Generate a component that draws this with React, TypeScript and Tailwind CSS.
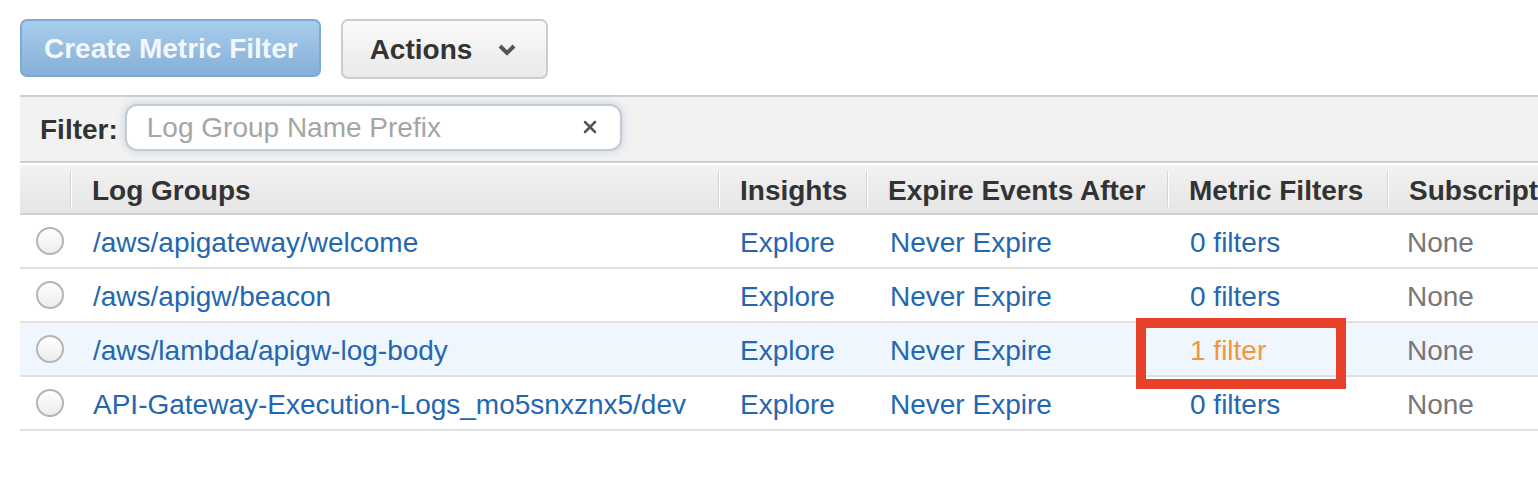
import { X } from "lucide-react";

const cols = "grid grid-cols-[50px_648px_148px_301px_220px_260px]";

const rows = [
  { name: "/aws/apigateway/welcome", filters: "0 filters" },
  { name: "/aws/apigw/beacon", filters: "0 filters" },
  { name: "/aws/lambda/apigw-log-body", filters: "1 filter", active: true },
  { name: "API-Gateway-Execution-Logs_mo5snxznx5/dev", filters: "0 filters" },
];

function HeaderCell({ label }: { label: string }) {
  return (
    <div className="flex items-center">
      <div className="w-[2px] h-[36px] bg-[#d3d3d3] border-r border-white" />
      <span className="pl-5 pt-[3px] font-bold text-[#333] whitespace-nowrap">{label}</span>
    </div>
  );
}

function Radio() {
  return (
    <div className="w-[28px] h-[28px] rounded-full border-2 border-[#b5b5b5] bg-gradient-to-b from-white to-[#ececec] shadow-[inset_0_1px_1px_rgba(255,255,255,0.9)]" />
  );
}

export default function App() {
  return (
    <div className="w-[1538px] h-[500px] bg-white overflow-hidden font-['Liberation_Sans',Arial,sans-serif] text-[28px] leading-none">
      <div className="flex gap-5 pl-5 pt-[19px]">
        <button className="h-[58px] pl-[22px] pr-[21px] pt-[2px] rounded-[7px] border-2 border-[#7ea9d1] bg-gradient-to-b from-[#a8cdec] to-[#86b0d8] text-[#f4f8fc] font-bold">
          Create Metric Filter
        </button>
        <button className="h-[60px] pl-[27px] pr-[30px] pt-[2px] rounded-[7px] border-2 border-[#cccccc] bg-gradient-to-b from-[#fbfbfb] to-[#e9e9e9] text-[#333] font-bold flex items-center gap-[26px]">
          Actions
          <svg width="18" height="12" viewBox="0 0 18 12">
            <path d="M2 2 L9 9 L16 2" fill="none" stroke="#555" strokeWidth="4" />
          </svg>
        </button>
      </div>

      <div className="ml-5 mt-4">
        <div className="h-[68px] border-t-2 border-b-2 border-[#cfcfcf] bg-[#f2f2f2] flex items-center pl-5 gap-[7px]">
          <span className="font-bold text-[#333] pt-[2px]">Filter:</span>
          <div className="w-[497px] h-[47px] -mt-1 rounded-[12px] border-2 border-[#c9c9c9] bg-white shadow-[0_0_8px_rgba(120,170,225,0.45)] flex items-center justify-between pl-5 pr-5">
            <span className="text-[#a5a5a5] pt-[2px]">Log Group Name Prefix</span>
            <X size={20} strokeWidth={3} className="text-[#555]" />
          </div>
        </div>

        <div className={`${cols} mt-[2px] h-[50px] border-b-2 border-[#cfcfcf] bg-gradient-to-b from-[#f2f2f2] to-[#e5e5e5]`}>
          <div />
          <HeaderCell label="Log Groups" />
          <HeaderCell label="Insights" />
          <HeaderCell label="Expire Events After" />
          <HeaderCell label="Metric Filters" />
          <HeaderCell label="Subscriptions" />
        </div>

        {rows.map((r) => (
          <div
            key={r.name}
            className={`${cols} h-[54px] border-b-2 border-[#e0e0e0] ${r.active ? "bg-[#eff6fd]" : "bg-white"}`}
          >
            <div className="flex items-center pl-4">
              <Radio />
            </div>
            <div className="flex items-center pl-[23px] pt-[3px] text-[#2467b0] whitespace-nowrap">{r.name}</div>
            <div className="flex items-center pl-[22px] pt-[3px] text-[#2467b0]">Explore</div>
            <div className="flex items-center pl-[24px] pt-[3px] text-[#2467b0]">Never Expire</div>
            <div className="relative flex items-center pl-[23px] pt-[3px]">
              <span className={r.active ? "text-[#f3963a]" : "text-[#2467b0]"}>{r.filters}</span>
              {r.active && (
                <div className="absolute left-[-31px] top-[-5px] w-[210px] h-[71px] border-[10px] border-[#e8412a]" />
              )}
            </div>
            <div className="flex items-center pl-[20px] pt-[3px] text-[#777]">None</div>
          </div>
        ))}
      </div>
    </div>
  );
}
